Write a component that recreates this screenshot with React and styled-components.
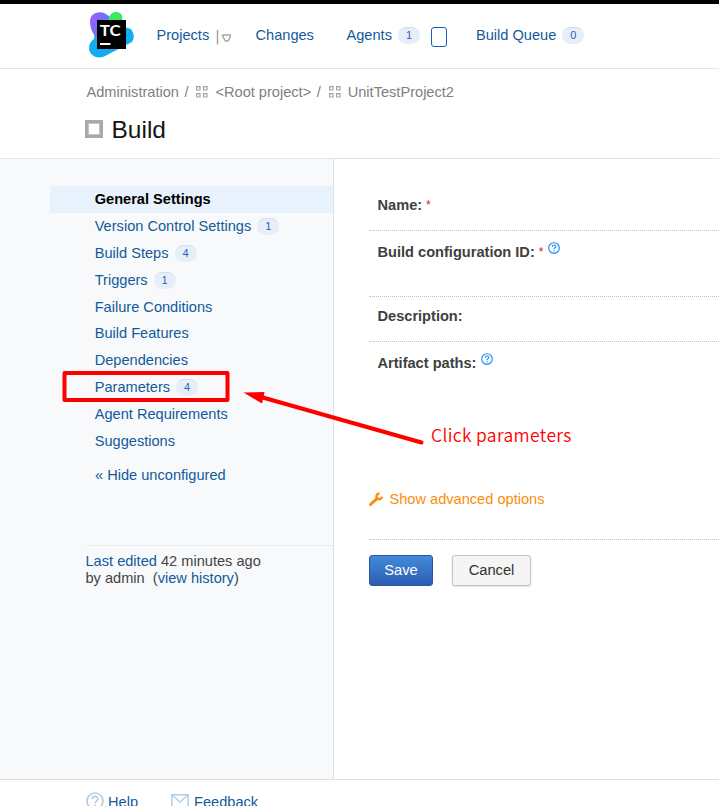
import React from "react";
import styled, { createGlobalStyle, css } from "styled-components";

const GlobalStyle = createGlobalStyle`
  * { box-sizing: border-box; }
  body {
    margin: 0;
    overflow: hidden;
    background: #fff;
    color: #444;
    font: 14.6px/17px "Liberation Sans", Arial, sans-serif;
  }
`;

const Page = styled.div`
  position: relative;
  display: flex;
  flex-direction: column;
  width: 719px;
  height: 806px;
  overflow: hidden;
  border-top: 4px solid #000;
`;

const Header = styled.header`
  display: flex;
  flex-shrink: 0;
  align-items: flex-start;
  height: 65px;
  padding-left: 87px;
  border-bottom: 1px solid #dfe5eb;
`;

const Logo = styled.svg`
  width: 48px;
  height: 48px;
  margin-top: 7px;
`;

const Nav = styled.nav`
  display: flex;
  align-items: flex-start;
  padding: 23px 0 0 21.5px;
`;

const Link = styled.a`
  color: #135a9c;
  white-space: pre;
`;

const NavItem = styled.div`
  display: flex;
  align-items: flex-start;
  width: ${(p) => p.$width}px;
`;

const Chevron = styled.svg`
  width: 16px;
  height: 18px;
  margin: 2px 0 0 5.5px;
`;

const Badge = styled.span`
  display: flex;
  justify-content: center;
  width: 22px;
  height: 17px;
  margin: 0 0 0 6px;
  border-top: 1px solid #cfdff1;
  border-radius: 8.5px;
  background: #e6eef8;
  color: #2a62c0;
  font-size: 11px;
  font-weight: 400;
  line-height: 15px;
`;

const AgentBox = styled.span`
  width: 16px;
  height: 20px;
  margin: 0 0 0 11px;
  border: 1px solid #1263bd;
  border-radius: 3px;
`;

const TitleBand = styled.section`
  flex-shrink: 0;
  height: 90px;
  padding: 15px 0 0 86.5px;
  border-bottom: 1px solid #dfe5eb;
`;

const Breadcrumbs = styled.div`
  display: flex;
  height: 17px;
  color: #808080;
  white-space: pre;
`;

const Slash = styled.span`
  width: 17.5px;
  padding-left: 5.5px;
`;

const ProjectIcon = styled.svg`
  width: 12px;
  height: 12px;
  margin: 2px 7px 0 0;
`;

const Title = styled.h1`
  display: flex;
  align-items: center;
  height: 30px;
  margin: 14px 0 0 -1.5px;
  color: #151515;
  font-size: 24.5px;
  font-weight: 400;
  line-height: 30px;
`;

const BuildIcon = styled.span`
  width: 18px;
  height: 18px;
  margin: -3px 8.5px 0 0;
  border: 3px solid #a9a9a9;
  box-shadow: inset 0 0 0 1px #c4c4c4;
`;

const Main = styled.main`
  display: flex;
  flex-shrink: 0;
  height: 621px;
  border-bottom: 1px solid #dde1e6;
`;

const Sidebar = styled.aside`
  width: 334px;
  padding: 27px 0 0 50px;
  border-right: 1px solid #dce0e7;
  background: #f7f9fb;
`;

const MenuRow = styled.div`
  display: flex;
  height: 26.9px;
  padding: 5px 0 0 44.7px;
  ${(p) =>
    p.$selected &&
    css`
      background: #e7f2fd;
      color: #000;
      font-weight: 700;
    `}
`;

const HideLink = styled.div`
  padding: 12px 0 0 45px;
`;

const Edited = styled.div`
  height: 60px;
  margin: 61.5px 0 0 35.5px;
  padding-top: 7px;
  border-top: 1px dotted #d9dde2;
  white-space: pre;
`;

const Content = styled.section`
  flex: 1;
  padding: 27px 0 0 35px;
`;

const Field = styled.div`
  display: flex;
  height: ${(p) => p.$height}px;
  padding: ${(p) => p.$top}px 0 0 8.5px;
  border-bottom: ${(p) => (p.$last ? "0" : "1px dotted #bfbfbf")};
  color: #404040;
  font-weight: 700;
`;

const Required = styled.span`
  margin: 0 0 0 4px;
  color: #d8171f;
  font-size: 12px;
  font-weight: 400;
`;

const HelpMark = styled.svg`
  width: 12px;
  height: 12px;
  margin: -2px 0 0 4.5px;
`;

const Advanced = styled.div`
  display: flex;
  height: 51px;
  padding-top: 2px;
  border-bottom: 1px dotted #bfbfbf;
  color: #fd8c08;
`;

const Wrench = styled.svg`
  width: 14px;
  height: 14px;
  margin: 1px 6.5px 0 0;
`;

const Actions = styled.div`
  display: flex;
  gap: 19px;
  padding-top: 15px;
`;

const Button = styled.button`
  width: ${(p) => (p.$primary ? 64 : 79)}px;
  height: 31px;
  padding: 0;
  border: 1px solid ${(p) => (p.$primary ? "#2857a0" : "#c4c4c4")};
  border-radius: 3px;
  background: ${(p) =>
    p.$primary ? "linear-gradient(#428bd8, #2d5db3)" : "#f5f5f5"};
  box-shadow: ${(p) => (p.$primary ? "none" : "0 1px 2px #0000001f")};
  color: ${(p) => (p.$primary ? "#fff" : "#333")};
  font: 14.7px/17px "Liberation Sans", Arial, sans-serif;
`;

const Footer = styled.footer`
  display: flex;
  flex-shrink: 0;
  padding: 12px 0 0 86px;
`;

const FooterIcon = styled.svg`
  width: 18px;
  height: 18px;
  margin-right: ${(p) => p.$gap}px;
`;

const FooterLink = styled(Link)`
  width: ${(p) => p.$width}px;
  padding-top: 2px;
`;

const Annotation = styled.svg`
  position: absolute;
  left: 0;
  top: -4px;
  width: 719px;
  height: 806px;
  pointer-events: none;
`;

const AnnotationText = styled.div`
  position: absolute;
  left: 431px;
  top: 418px;
  color: #f00;
  font: 350 17.5px/26px "Noto Sans CJK SC", "Open Sans", sans-serif;
  letter-spacing: 0.35px;
  white-space: nowrap;
`;

const Grid = () => (
  <ProjectIcon viewBox="0 0 12 12" fill="none" stroke="#a3a3a3" strokeWidth="1.2">
    <path d="M.6.6h3.4v3.4h-3.4zM7.6.6h3.4v3.4h-3.4zM.6 7.6h3.4v3.4h-3.4zM7.6 7.6h3.4v3.4h-3.4z" />
  </ProjectIcon>
);

const Help = () => (
  <HelpMark viewBox="0 0 12 12" fill="none" stroke="#188ff0" strokeWidth="1.15">
    <circle cx="6" cy="6" r="5.3" />
    <path d="M4.2 4.7C4.2 2.4 7.9 2.5 7.8 4.5 7.8 5.9 6 5.7 6 7.3M6 8.2v1.2" />
  </HelpMark>
);

const menu = [
  ["General Settings"],
  ["Version Control Settings", 1],
  ["Build Steps", 4],
  ["Triggers", 1],
  ["Failure Conditions"],
  ["Build Features"],
  ["Dependencies"],
  ["Parameters", 4],
  ["Agent Requirements"],
  ["Suggestions"],
];

export default function App() {
  return (
    <>
      <GlobalStyle />
      <Page>
        <Header>
          <Logo viewBox="0 0 48 48">
            <defs>
              <linearGradient id="violet" x1="0" y1="0" x2="1" y2=".5">
                <stop offset="0" stopColor="#a557ff" />
                <stop offset="1" stopColor="#408af4" />
              </linearGradient>
            </defs>
            <path d="M9 11 31 14 44 18Q49 25 45 31L18 45C10 49 2 44 2 37 2 33 4 30 7 28z" fill="#12adf0" />
            <path d="M3 10C3 2 13-1 19 3L29 10 17 30 8 25C4 20 3 15 3 10z" fill="url(#violet)" />
            <path d="M21 9C23 3 25 1 29 1 35 1 37 6 34 12L21 16z" fill="#3bea62" />
            <path d="M10 9h29v29H10z" />
            <path d="M13 33h10.5" stroke="#fff" strokeWidth="2" />
            <text x="12.8" y="25" fill="#fff" fontFamily="Lato" fontSize="16" fontWeight="700" textLength="21" lengthAdjust="spacingAndGlyphs">TC</text>
          </Logo>
          <Nav>
            <NavItem $width={99}>
              <Link>Projects</Link>
              <Chevron viewBox="0 0 16 18" fill="none" stroke="#a5a5a5">
                <path d="M2.5 1v14.5" strokeWidth="1.5" />
                <path d="M8 6h7.5q.7 0 .2.8L13 12h-2.5L7.5 6.8Q7 6 8 6z" strokeWidth="1.4" />
              </Chevron>
            </NavItem>
            <NavItem $width={91}><Link>Changes</Link></NavItem>
            <NavItem $width={129.5}><Link>Agents</Link><Badge>1</Badge><AgentBox /></NavItem>
            <NavItem $width={110}><Link>Build Queue</Link><Badge>0</Badge></NavItem>
          </Nav>
        </Header>
        <TitleBand>
          <Breadcrumbs>
            <span>Administration</span><Slash>/</Slash><Grid />
            <span>&lt;Root project&gt;</span><Slash>/</Slash><Grid />
            <span>UnitTestProject2</span>
          </Breadcrumbs>
          <Title><BuildIcon />Build</Title>
        </TitleBand>
        <Main>
          <Sidebar>
            {menu.map(([label, count], i) => (
              <MenuRow key={label} $selected={i === 0}>
                {i === 0 ? <span>{label}</span> : <Link>{label}</Link>}
                {count && <Badge>{count}</Badge>}
              </MenuRow>
            ))}
            <HideLink><Link>« Hide unconfigured</Link></HideLink>
            <Edited><Link>Last edited</Link> 42 minutes ago{"\n"}by admin  (<Link>view history</Link>)</Edited>
          </Sidebar>
          <Content>
            <Field $height={45} $top={11}>Name:<Required>*</Required></Field>
            <Field $height={66} $top={13}>Build configuration ID:<Required>*</Required><Help /></Field>
            <Field $height={45} $top={11}>Description:</Field>
            <Field $height={147} $top={13} $last>Artifact paths:<Help /></Field>
            <Advanced>
              <Wrench viewBox="0 0 14 14" fill="none" stroke="#fd8c08">
                <path d="M1.5 12.5 8.2 6.3" strokeWidth="3" strokeLinecap="round" />
                <path d="M10.5 1.3C7.3 1.5 6.5 5.2 8.5 6.6 10.5 8 12.8 6.8 12.9 4.6" strokeWidth="2.3" />
              </Wrench>
              Show advanced options
            </Advanced>
            <Actions><Button $primary>Save</Button><Button>Cancel</Button></Actions>
          </Content>
        </Main>
        <Footer>
          <FooterIcon $gap={4} viewBox="0 0 18 18" fill="none" stroke="#b6cee3" strokeWidth="1.7">
            <circle cx="9" cy="9" r="8" />
            <path d="M6.2 7C6.2 3.5 12 3.5 11.8 7 11.8 9 9 8.8 9 11.5M9 12.7v1.8" />
          </FooterIcon>
          <FooterLink $width={63}>Help</FooterLink>
          <FooterIcon $gap={5} viewBox="0 0 18 18" fill="none" stroke="#b6cee3" strokeWidth="1.5">
            <path d="M.8 2.8h16.4v13H.8zM1 3l8 7 8-7" />
          </FooterIcon>
          <FooterLink>Feedback</FooterLink>
        </Footer>
        <Annotation viewBox="0 0 719 806">
          <rect x="64.5" y="373" width="163" height="27" fill="none" stroke="#f00" strokeWidth="4" strokeLinejoin="round" />
          <path d="M261 397 421.5 442.5" stroke="#f00" strokeWidth="4" strokeLinecap="round" />
          <path d="M243.5 392.5 264.5 392 262 403.5z" fill="#f00" />
        </Annotation>
        <AnnotationText>Click parameters</AnnotationText>
      </Page>
    </>
  );
}
